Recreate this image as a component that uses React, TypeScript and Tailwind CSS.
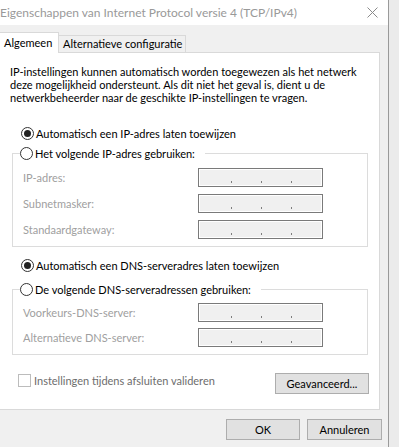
import React from "react";

const font = "font-['Lato','Noto_Sans',sans-serif]";

function Radio({ checked }: { checked?: boolean }) {
  return (
    <span className="w-[13px] h-[13px] rounded-full border border-[#333333] bg-white flex items-center justify-center shrink-0">
      {checked && <span className="w-[7px] h-[7px] rounded-full bg-[#222222]" />}
    </span>
  );
}

function IpField() {
  return (
    <div className="w-[125px] h-[19px] border border-[#7a7a7a] bg-[#f0f0f0]">
      <div className="h-full border border-white flex items-start pl-[31px] pt-[11px] gap-[29px]">
        <span className="w-px h-[2px] bg-[#7d7d7d]" />
        <span className="w-px h-[2px] bg-[#7d7d7d]" />
        <span className="w-px h-[2px] bg-[#7d7d7d]" />
      </div>
    </div>
  );
}

function FieldRow({ label }: { label: string }) {
  return (
    <div className="flex items-center h-[19px]">
      <span className="w-[175px] text-[#a0a0a0]">{label}</span>
      <IpField />
    </div>
  );
}

function Group({
  legend,
  children,
  gap,
}: {
  legend: string;
  children: React.ReactNode;
  gap: string;
}) {
  return (
    <fieldset className="ml-[12px] w-[356px] border border-[#dcdcdc] pl-[10px] pb-[7px]">
      <legend className="ml-[-3px] pr-[10px] h-[16px] flex items-center gap-[2px] text-black">
        <Radio />
        <span>{legend}</span>
      </legend>
      <div className={`flex flex-col ${gap}`}>{children}</div>
    </fieldset>
  );
}

function Button({ children, w }: { children: React.ReactNode; w: string }) {
  return (
    <div
      className={`${w} h-[21px] border border-[#adadad] bg-[#e1e1e1] flex items-center justify-center text-black`}
    >
      {children}
    </div>
  );
}

export default function App() {
  return (
    <div
      className={`w-[399px] h-[447px] overflow-hidden flex bg-[linear-gradient(to_right,#c9c9c9,#ebebeb_6px)] ${font} text-[11px] leading-[13px]`}
    >
      <div className="w-[389px] h-full shrink-0 bg-[#f0f0f0] border-r border-[#9a9a9a] flex flex-col">
        {/* title bar */}
        <div className="h-[25px] bg-white flex items-center shrink-0">
          <span className="ml-0 text-[12px] text-[#999999] whitespace-nowrap">
            Eigenschappen van Internet Protocol versie 4 (TCP/IPv4)
          </span>
          <svg
            className="ml-auto mr-[10px]"
            width="11"
            height="11"
            viewBox="0 0 11 11"
          >
            <path d="M0.5 0.5 L10.5 10.5 M10.5 0.5 L0.5 10.5" stroke="#8a8a8a" strokeWidth="1" />
          </svg>
        </div>

        {/* tabs */}
        <div className="mt-[7px] flex items-end h-[20px] relative z-10">
          <div className="w-[59px] h-[21px] -mb-px bg-white border-r border-t border-[#d9d9d9] pl-[4px] pt-[3px] text-black">
            Algemeen
          </div>
          <div className="w-[127px] h-[17px] bg-[#f0f0f0] border-r border-t border-[#d9d9d9] pl-[4px] pt-[1px] text-black whitespace-nowrap">
            Alternatieve configuratie
          </div>
        </div>

        {/* panel */}
        <div className="ml-[-1px] w-[381px] h-[358px] bg-white border border-[#d9d9d9] flex flex-col">
          <p className="mt-[12px] ml-[10px] text-black w-[360px]">
            IP-instellingen kunnen automatisch worden toegewezen als het netwerk
            deze mogelijkheid ondersteunt. Als dit niet het geval is, dient u de
            netwerkbeheerder naar de geschikte IP-instellingen te vragen.
          </p>

          <div className="mt-[21px] ml-[21px] h-[16px] flex items-center gap-[2px] text-black">
            <Radio checked />
            <span>Automatisch een IP-adres laten toewijzen</span>
          </div>

          <div className="mt-[4px]">
            <Group legend="Het volgende IP-adres gebruiken:" gap="gap-[7px] mt-[7px]">
              <FieldRow label="IP-adres:" />
              <FieldRow label="Subnetmasker:" />
              <FieldRow label="Standaardgateway:" />
            </Group>
          </div>

          <div className="mt-[10px] ml-[21px] h-[16px] flex items-center gap-[2px] text-black">
            <Radio checked />
            <span>Automatisch een DNS-serveradres laten toewijzen</span>
          </div>

          <div className="mt-[8px]">
            <Group legend="De volgende DNS-serveradressen gebruiken:" gap="gap-[6px] mt-[6px]">
              <FieldRow label="Voorkeurs-DNS-server:" />
              <FieldRow label="Alternatieve DNS-server:" />
            </Group>
          </div>

          <div className="mt-[18px] flex items-start">
            <div className="ml-[18px] mt-[1px] h-[13px] flex items-center gap-[3px]">
              <span className="w-[13px] h-[13px] border border-[#bcbcbc] bg-white" />
              <span className="text-[#6d6d6d]">Instellingen tijdens afsluiten valideren</span>
            </div>
            <div className="ml-auto mr-[10px]">
              <Button w="w-[94px]">Geavanceerd...</Button>
            </div>
          </div>
        </div>

        {/* footer */}
        <div className="mt-[9px] flex justify-end gap-[7px] pr-[6px]">
          <Button w="w-[74px]">OK</Button>
          <Button w="w-[75px]">Annuleren</Button>
        </div>
      </div>
    </div>
  );
}
